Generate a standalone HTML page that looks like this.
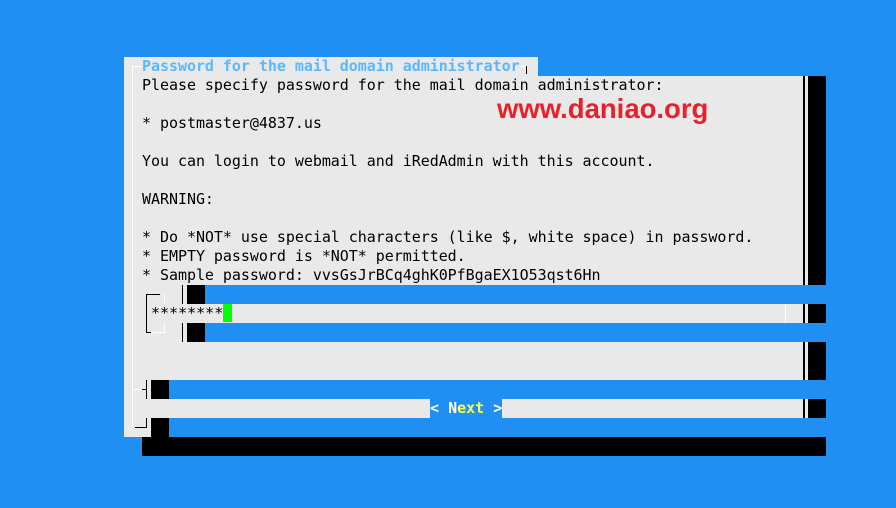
<!DOCTYPE html>
<html><head><meta charset="utf-8"><style>
*{margin:0;padding:0}
body{width:896px;height:508px;background:#1f8ff3;position:relative;overflow:hidden;font-family:"DejaVu Sans Mono","Liberation Mono",monospace;font-size:15px}
.a{position:absolute}
.t{position:absolute;left:142px;height:19px;line-height:19px;white-space:pre;color:#000;letter-spacing:-0.04px}
.g{background:#e9e9e9}
.b{background:#1f8ff3}
.k{background:#000}
</style></head><body>
<div class="a g" style="left:124px;top:57px;width:414px;height:19px"></div>
<div class="a g" style="left:124px;top:76px;width:684px;height:361px"></div>
<div class="a k" style="left:808px;top:76px;width:18px;height:361px"></div>
<div class="a k" style="left:142px;top:437px;width:684px;height:19px"></div>
<div class="a k" style="left:803px;top:76px;width:2px;height:342px"></div>
<div class="a" style="left:132px;top:67px;width:1px;height:360px;background:#fff"></div>
<div class="a" style="left:132px;top:66px;width:10px;height:1px;background:#fff"></div>
<div class="a" style="left:520px;top:66px;width:6px;height:1px;background:#fff"></div>
<div class="a k" style="left:526px;top:66px;width:1px;height:8px"></div>
<div class="t" style="top:57px;color:#5ab8ff;font-weight:bold">Password for the mail domain administrator</div>
<div class="t" style="top:76px">Please specify password for the mail domain administrator:</div>
<div class="t" style="top:114px">* postmaster@4837.us</div>
<div class="t" style="top:152px">You can login to webmail and iRedAdmin with this account.</div>
<div class="t" style="top:190px">WARNING:</div>
<div class="t" style="top:228px">* Do *NOT* use special characters (like $, white space) in password.</div>
<div class="t" style="top:247px">* EMPTY password is *NOT* permitted.</div>
<div class="t" style="top:266px">* Sample password: vvsGsJrBCq4ghK0PfBgaEX1O53qst6Hn</div>
<div class="a" style="left:497px;top:92px;font-family:'Liberation Sans',sans-serif;font-weight:bold;font-size:27.5px;color:#e8202a;line-height:34px">www.daniao.org</div>
<div class="a k" style="left:187px;top:285px;width:18px;height:19px"></div>
<div class="a b" style="left:205px;top:285px;width:621px;height:19px"></div>
<div class="a k" style="left:187px;top:323px;width:18px;height:19px"></div>
<div class="a b" style="left:205px;top:323px;width:621px;height:19px"></div>
<div class="a k" style="left:808px;top:304px;width:18px;height:19px"></div>
<div class="a" style="left:785px;top:304px;width:1px;height:19px;background:#fff"></div>
<div class="a k" style="left:182px;top:285px;width:1px;height:19px"></div>
<div class="a k" style="left:182px;top:323px;width:1px;height:19px"></div>
<div class="a k" style="left:146px;top:294px;width:1px;height:39px"></div>
<div class="a k" style="left:146px;top:294px;width:14px;height:1px"></div>
<div class="a k" style="left:146px;top:332px;width:5px;height:1px"></div>
<div class="a" style="left:164px;top:294px;width:1px;height:10px;background:#fff"></div>
<div class="a" style="left:164px;top:323px;width:1px;height:10px;background:#fff"></div>
<div class="a" style="left:151px;top:332px;width:14px;height:1px;background:#fff"></div>
<div class="t" style="left:151px;top:304px;letter-spacing:0">********</div>
<div class="a" style="left:223px;top:304px;width:9px;height:18px;background:#00ff00"></div>
<div class="a k" style="left:151px;top:380px;width:18px;height:19px"></div>
<div class="a b" style="left:169px;top:380px;width:657px;height:19px"></div>
<div class="a k" style="left:151px;top:418px;width:18px;height:19px"></div>
<div class="a b" style="left:169px;top:418px;width:657px;height:19px"></div>
<div class="a k" style="left:808px;top:399px;width:18px;height:19px"></div>
<div class="a" style="left:132px;top:389px;width:14px;height:1px;background:#fff"></div>
<div class="a k" style="left:146px;top:380px;width:1px;height:19px"></div>
<div class="a k" style="left:142px;top:389px;width:5px;height:1px"></div>
<div class="a k" style="left:146px;top:418px;width:1px;height:9px"></div>
<div class="a k" style="left:135px;top:427px;width:12px;height:1px"></div>
<div class="a b" style="left:430px;top:399px;width:72px;height:19px"></div>
<div class="t" style="left:430px;top:399px;color:#fff;font-weight:bold;letter-spacing:0">&lt; <span style="color:#fff">N</span><span style="color:#ffff55">ext</span> &gt;</div>
</body></html>
